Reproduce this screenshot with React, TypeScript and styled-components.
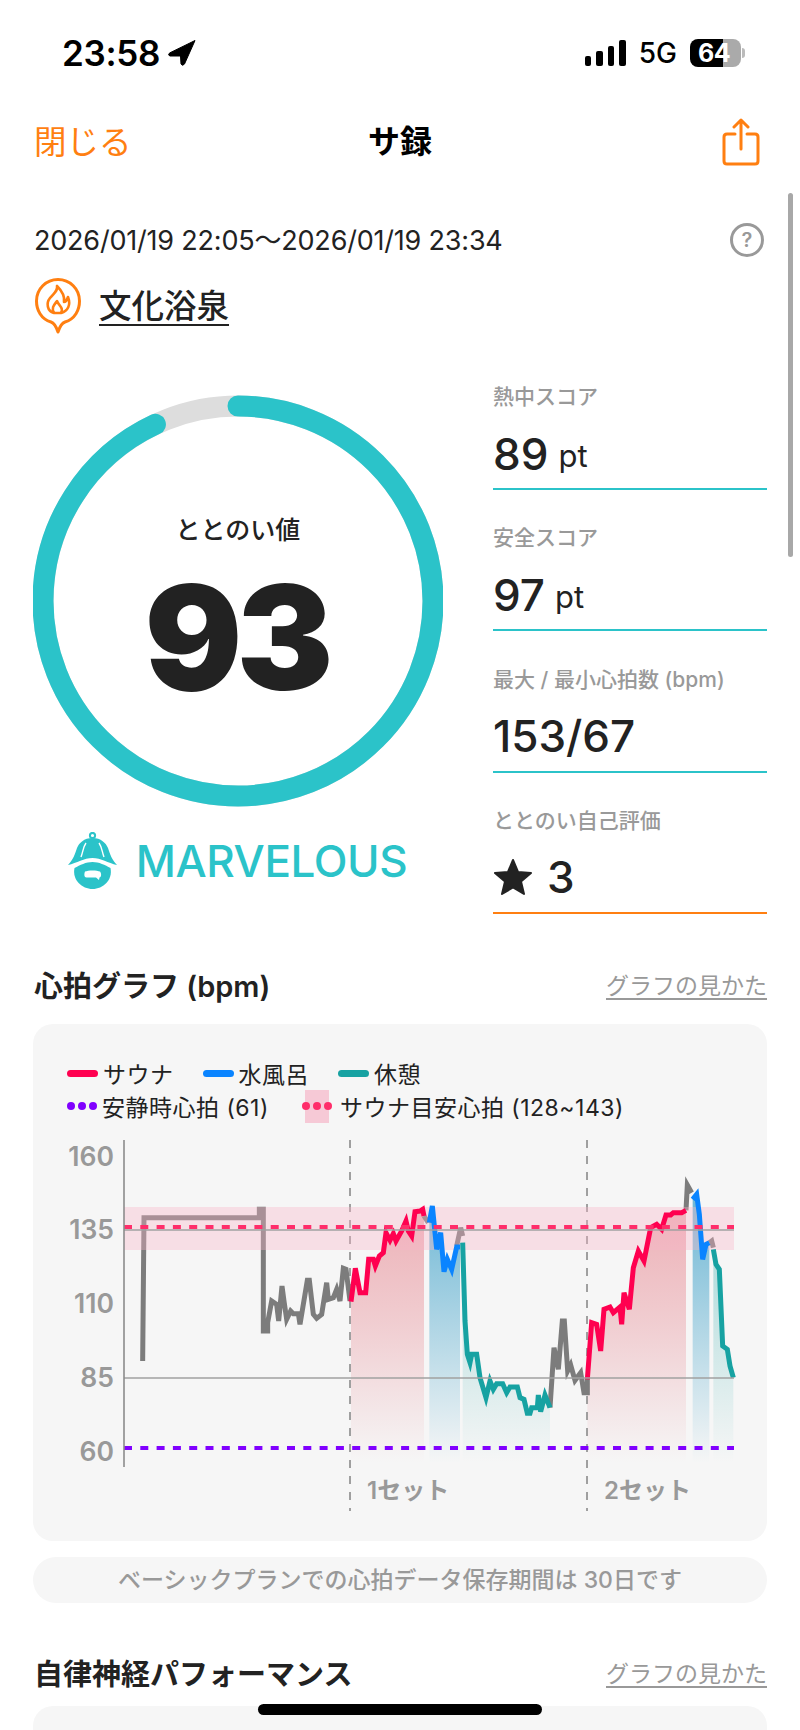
import React, { FC } from 'react'
import styled, { createGlobalStyle } from 'styled-components'

const ORANGE = '#ff7f11'
const TEAL = '#2bc3c9'
const INK = '#222'
const MUTED = '#999'
const SANS = `Inter, "Noto Sans CJK JP", sans-serif`

type Point = [number, number]
type Kind = 'idle' | 'sauna' | 'water' | 'rest'

// traced from the reference, two local origins so the numbers stay readable
const fromA = (pts: Point[]): Point[] => pts.map(([x, y]) => [100 + x / 3, 1180 + y / 3])
const fromB = (pts: Point[]): Point[] => pts.map(([x, y]) => [430 + x / 3, 1180 + y / 3])

const segments: { kind: Kind; pts: Point[] }[] = [
  {
    kind: 'idle',
    pts: fromA([
      [128, 540], [132, 110], [478, 110], [478, 85], [490, 85], [490, 450], [503, 450], [503, 425],
      [515, 360], [530, 370], [536, 420], [546, 315], [552, 360], [560, 415], [572, 390], [580, 398],
      [595, 398], [600, 430], [622, 298], [628, 298], [640, 400], [650, 412], [665, 400], [680, 305],
      [685, 355], [700, 350], [710, 325], [720, 360], [730, 262], [738, 265], [750, 360],
    ]),
  },
  {
    kind: 'sauna',
    pts: fromA([
      [753, 362], [766, 262], [780, 335], [797, 335], [806, 235], [820, 235], [826, 255], [838, 225],
      [850, 215], [858, 155], [870, 178], [880, 158], [888, 180], [905, 150], [918, 120], [925, 150],
      [935, 165], [945, 92], [960, 90], [968, 85], [972, 105],
    ]),
  },
  { kind: 'idle', pts: fromA([[972, 105], [985, 125]]) },
  {
    kind: 'water',
    pts: fromA([
      [988, 125], [997, 75], [1010, 205], [1022, 155], [1032, 272], [1042, 235], [1055, 265], [1070, 198],
      [1080, 198],
    ]),
  },
  { kind: 'idle', pts: fromB([[80, 195], [92, 140], [98, 165]]) },
  {
    kind: 'rest',
    pts: fromB([
      [98, 185], [105, 420], [112, 520], [120, 545], [125, 520], [140, 520], [150, 590], [168, 650],
      [180, 600], [190, 625], [200, 608], [218, 608], [230, 635], [240, 618], [262, 618], [270, 650],
      [282, 655], [292, 697], [300, 697], [305, 680], [322, 680], [325, 642], [332, 692], [345, 642],
      [360, 680],
    ]),
  },
  {
    kind: 'idle',
    pts: fromB([
      [360, 680], [372, 500], [385, 565], [397, 420], [403, 420], [413, 570], [422, 552], [435, 598],
      [452, 575], [462, 635], [472, 635], [472, 590],
    ]),
  },
  {
    kind: 'sauna',
    pts: fromB([
      [472, 595], [485, 425], [500, 430], [512, 510], [522, 385], [540, 378], [550, 395], [570, 378],
      [575, 430], [582, 335], [598, 385], [610, 260], [625, 210], [642, 240], [662, 140], [680, 130],
      [695, 145], [708, 102], [722, 102], [730, 95], [755, 95], [768, 88],
    ]),
  },
  { kind: 'idle', pts: fromB([[768, 88], [772, 12], [785, 35]]) },
  {
    kind: 'water',
    pts: fromB([[788, 55], [800, 40], [808, 100], [818, 235], [828, 190], [838, 185]]),
  },
  { kind: 'idle', pts: fromB([[838, 185], [845, 180], [850, 200]]) },
  {
    kind: 'rest',
    pts: fromB([[850, 205], [858, 250], [868, 265], [878, 495], [892, 505], [900, 555], [910, 590]]),
  },
]

const traceColor: Record<Kind, string> = {
  idle: '#7c7c7c',
  sauna: '#ff0050',
  water: '#0a84ff',
  rest: '#17a2a2',
}

const toLine = (pts: Point[]) => pts.map(p => p.join(',')).join(' ')
const FILL_BOTTOM = 1462
const toArea = (pts: Point[]) =>
  toLine([[pts[0][0], FILL_BOTTOM], ...pts, [pts[pts.length - 1][0], FILL_BOTTOM]])

const yTicks = [
  { label: '160', y: 1155 },
  { label: '135', y: 1228 },
  { label: '110', y: 1302 },
  { label: '85', y: 1376 },
  { label: '60', y: 1450 },
]

const stats = [
  { label: '熱中スコア', value: '89', unit: 'pt' },
  { label: '安全スコア', value: '97', unit: 'pt' },
  { label: '最大 / 最小心拍数 (bpm)', value: '153/67' },
]

const GlobalStyle = createGlobalStyle`
  html, body {
    margin: 0;
    padding: 0;
    background: #fff;
    overflow: hidden;
  }
  * {
    box-sizing: border-box;
  }
`

const HeartChart: FC = () => (
  <ChartSvg viewBox='33 1130 734 392'>
    <defs>
      <linearGradient id='fill-sauna' gradientUnits='userSpaceOnUse' x1='0' y1='1206' x2='0' y2='1462'>
        <stop offset='0' stopColor='#e88f98' stopOpacity='0.68' />
        <stop offset='0.45' stopColor='#e88f98' stopOpacity='0.4' />
        <stop offset='1' stopColor='#e88f98' stopOpacity='0' />
      </linearGradient>
      <linearGradient id='fill-water' gradientUnits='userSpaceOnUse' x1='0' y1='1206' x2='0' y2='1462'>
        <stop offset='0' stopColor='#5aaed0' stopOpacity='0.85' />
        <stop offset='1' stopColor='#5aaed0' stopOpacity='0' />
      </linearGradient>
      <linearGradient id='fill-rest' gradientUnits='userSpaceOnUse' x1='0' y1='1260' x2='0' y2='1462'>
        <stop offset='0' stopColor='#17a2a2' stopOpacity='0.3' />
        <stop offset='1' stopColor='#17a2a2' stopOpacity='0' />
      </linearGradient>
    </defs>

    {segments
      .filter(s => s.kind !== 'idle')
      .map((s, i) => (
        <polygon key={i} points={toArea(s.pts)} fill={`url(#fill-${s.kind})`} />
      ))}

    <line x1='350' x2='350' y1='1139' y2='1510' stroke='#8a8a8a' strokeWidth='1.6' strokeDasharray='8 8' />
    <line x1='587' x2='587' y1='1139' y2='1510' stroke='#8a8a8a' strokeWidth='1.6' strokeDasharray='8 8' />

    {segments
      .filter(s => s.kind === 'idle')
      .map((s, i) => (
        <polyline key={i} points={toLine(s.pts)} fill='none' stroke={traceColor.idle} strokeWidth='5' />
      ))}

    <rect x='124' y='1206' width='610' height='43' fill='#f9b4c8' fillOpacity='0.36' />

    {segments
      .filter(s => s.kind !== 'idle')
      .map((s, i) => (
        <polyline key={i} points={toLine(s.pts)} fill='none' stroke={traceColor[s.kind]} strokeWidth='5' />
      ))}

    <line x1='124' x2='734' y1='1229' y2='1229' stroke='#a0a0a0' strokeWidth='1.5' />
    <line x1='124' x2='734' y1='1377' y2='1377' stroke='#a0a0a0' strokeWidth='1.5' />
    <line x1='124' x2='734' y1='1226' y2='1226' stroke='#ff2d6a' strokeWidth='4' strokeDasharray='8 8.3' />
    <line x1='124' x2='734' y1='1447' y2='1447' stroke='#8000ff' strokeWidth='4' strokeDasharray='8 8.3' />
    <line x1='124' x2='124' y1='1139' y2='1466' stroke='#8c8c8c' strokeWidth='1.6' />

    {yTicks.map(t => (
      <AxisLabel key={t.label} x='114' y={t.y + 9.5} textAnchor='end'>
        {t.label}
      </AxisLabel>
    ))}
    <SetLabel x='367' y='1498'>1セット</SetLabel>
    <SetLabel x='604' y='1498'>2セット</SetLabel>
  </ChartSvg>
)

const App: FC = () => {
  return (
    <Page>
      <GlobalStyle />
      <StatusBar>
        <Clock>
          23:58
          <svg width='28' height='26' viewBox='0 0 28 26'>
            <path d='M27 0.5 L1.5 13 Q-0.5 15.5 2 16 L12.5 16 L13 24 Q14.5 26.5 16.5 24 Z' fill='#000' stroke='#000' strokeLinejoin='round' />
          </svg>
        </Clock>
        <StatusRight>
          <Signal>
            <SignalBar $h={10} />
            <SignalBar $h={15} />
            <SignalBar $h={20} />
            <SignalBar $h={26} />
          </Signal>
          <Network>5G</Network>
          <Battery>64</Battery>
        </StatusRight>
      </StatusBar>

      <Nav>
        <CloseLink>閉じる</CloseLink>
        <NavTitle>サ録</NavTitle>
        <ShareButton>
          <svg width='38' height='48' viewBox='0 0 38 48' fill='none' stroke={ORANGE} strokeWidth='3' strokeLinecap='round' strokeLinejoin='round'>
            <path d='M13 16 H5 Q2 16 2 19 V43 Q2 46 5 46 H33 Q36 46 36 43 V19 Q36 16 33 16 H25' />
            <path d='M19 31 V2 M12 9 L19 2 L26 9' />
          </svg>
        </ShareButton>
      </Nav>

      <Content>
        <MetaRow>
          <DateRange>2026/01/19 22:05～2026/01/19 23:34</DateRange>
          <Help>?</Help>
        </MetaRow>

        <VenueRow>
          <svg width='46' height='56' viewBox='0 0 46 56' fill='none' stroke={ORANGE} strokeLinejoin='round'>
            <path strokeWidth='3' d='M16 44 C6 41 1.5 32 1.5 23 C1.5 11 11 1.5 23 1.5 C35 1.5 44.5 11 44.5 23 C44.5 32 40 41 30 44 C27 45 25 48 23 54 C21 48 19 45 16 44 Z' />
            <path strokeWidth='2.6' d='M22 8 C23 13 19 15 15 20 C11 25 12 33 19 35 L26 35 C33 33 36 27 33 19 C32 22 30 24 29 24 C30 18 26 12 22 8 Z' />
            <path strokeWidth='2.6' d='M19 35 C16 30 19 27 22 23 C24 28 29 30 26 35' />
          </svg>
          <VenueName>文化浴泉</VenueName>
        </VenueRow>

        <Summary>
          <ScoreColumn>
            <Ring>
              <svg width='410' height='412' viewBox='0 0 410 412'>
                <circle cx='205' cy='206' r='195' fill='none' stroke='#ddd' strokeWidth='21' />
                <circle
                  cx='205'
                  cy='206'
                  r='195'
                  fill='none'
                  stroke={TEAL}
                  strokeWidth='21'
                  strokeLinecap='round'
                  strokeDasharray={`${2 * Math.PI * 195 * 0.93} ${2 * Math.PI * 195}`}
                  transform='rotate(-90 205 206)'
                />
              </svg>
              <RingText>
                <RingLabel>ととのい値</RingLabel>
                <RingValue>93</RingValue>
              </RingText>
            </Ring>
            <Rank>
              <svg width='50' height='57' viewBox='0 0 50 57'>
                <circle cx='24.5' cy='3.5' r='2.6' fill='none' stroke={TEAL} strokeWidth='2' />
                <path fill={TEAL} d='M24.5 6 C16 6 11 11 9 16 C7 22 5 28 0 33 C9 31 16 26 24.5 26 C33 26 40 31 49 33 C44 28 42 22 40 16 C38 11 33 6 24.5 6 Z' />
                <path fill='none' stroke='#fff' strokeWidth='1.4' d='M18 11 C15 15 15 20 13 25 M31 11 C34 15 34 20 36 25' />
                <path fill={TEAL} d='M6.5 36 C12 33 18 30 24.5 30 C31 30 37 33 42.5 36 C45 48 35 57 24.5 57 C14 57 4 48 6.5 36 Z' />
                <path fill='#fff' d='M17 39.5 C20 38 29 38 32 39.5 C34 42 33 45.5 31.5 45.5 L31 48 L28 45.5 L18.5 45.5 C16 45.5 16 42 17 39.5 Z' />
              </svg>
              <RankName>MARVELOUS</RankName>
            </Rank>
          </ScoreColumn>

          <StatColumn>
            {stats.map(s => (
              <Stat key={s.label} $accent={TEAL}>
                <StatLabel>{s.label}</StatLabel>
                <StatValue>
                  {s.value}
                  {s.unit && <StatUnit>{s.unit}</StatUnit>}
                </StatValue>
              </Stat>
            ))}
            <Stat $accent={ORANGE}>
              <StatLabel>ととのい自己評価</StatLabel>
              <StatValue>
                <svg width='40' height='38' viewBox='0 0 40 38'>
                  <path fill={INK} stroke={INK} strokeWidth='2' strokeLinejoin='round' d='M20 2 L25 14 L38 15 L28 23.5 L31 36 L20 29.5 L9 36 L12 23.5 L2 15 L15 14 Z' />
                </svg>
                <StarCount>3</StarCount>
              </StatValue>
            </Stat>
          </StatColumn>
        </Summary>

        <SectionHead $top={50}>
          <SectionTitle>心拍グラフ (bpm)</SectionTitle>
          <GuideLink>グラフの見かた</GuideLink>
        </SectionHead>

        <ChartCard>
          <Legend>
            <LegendRow $gap={29}>
              <LegendItem>
                <LegendLine $color={traceColor.sauna} />
                サウナ
              </LegendItem>
              <LegendItem>
                <LegendLine $color={traceColor.water} />
                水風呂
              </LegendItem>
              <LegendItem>
                <LegendLine $color={traceColor.rest} />
                休憩
              </LegendItem>
            </LegendRow>
            <LegendRow $gap={33}>
              <LegendItem>
                <LegendDots>
                  <Dot $color='#8000ff' />
                  <Dot $color='#8000ff' />
                  <Dot $color='#8000ff' />
                </LegendDots>
                安静時心拍 (61)
              </LegendItem>
              <LegendItem $gap={8}>
                <LegendDots $band>
                  <Dot $color='#ff2d6a' />
                  <Dot $color='#ff2d6a' />
                  <Dot $color='#ff2d6a' />
                </LegendDots>
                サウナ目安心拍 (128~143)
              </LegendItem>
            </LegendRow>
          </Legend>
          <HeartChart />
        </ChartCard>

        <Notice>ベーシックプランでの心拍データ保存期間は 30日です</Notice>

        <SectionHead $top={49}>
          <SectionTitle>自律神経パフォーマンス</SectionTitle>
          <GuideLink>グラフの見かた</GuideLink>
        </SectionHead>

        <NextCard />
      </Content>

      <ScrollThumb />
      <HomeIndicator />
    </Page>
  )
}

const Page = styled.div`
  position: relative;
  width: 800px;
  height: 1730px;
  overflow: hidden;
  background: #fff;
  font-family: ${SANS};
  color: ${INK};
`

const StatusBar = styled.div`
  height: 106px;
  padding: 0 59px 0 62px;
  display: flex;
  align-items: center;
  justify-content: space-between;
`

const Clock = styled.div`
  display: flex;
  align-items: center;
  gap: 8px;
  font-size: 35px;
  font-weight: 600;
  letter-spacing: -0.3px;
  color: #000;
`

const StatusRight = styled.div`
  display: flex;
  align-items: center;
`

const Signal = styled.div`
  display: flex;
  align-items: flex-end;
  gap: 5px;
  height: 26px;
`

const SignalBar = styled.span<{ $h: number }>`
  width: 6.5px;
  height: ${p => p.$h}px;
  border-radius: 2px;
  background: #000;
`

const Network = styled.span`
  margin-left: 13px;
  font-size: 28px;
  font-weight: 500;
  color: #000;
`

const Battery = styled.div`
  position: relative;
  margin-left: 13px;
  width: 51px;
  height: 28px;
  border-radius: 8px;
  background: linear-gradient(90deg, #000 0 65%, #aaa 65% 100%);
  color: #fff;
  font-size: 25px;
  font-weight: 700;
  line-height: 28px;
  padding-left: 8px;
  letter-spacing: -0.5px;

  &::after {
    content: '';
    position: absolute;
    right: -4px;
    top: 9px;
    width: 3px;
    height: 10px;
    border-radius: 0 3px 3px 0;
    background: #bbb;
  }
`

const Nav = styled.div`
  height: 74px;
  padding: 0 34px;
  display: grid;
  grid-template-columns: 1fr auto 1fr;
  align-items: center;
`

const CloseLink = styled.span`
  margin-bottom: 7px;
  font-size: 32.5px;
  color: ${ORANGE};
`

const NavTitle = styled.span`
  margin-bottom: 8px;
  font-size: 32px;
  font-weight: 700;
  color: #000;
`

const ShareButton = styled.div`
  display: flex;
  justify-content: flex-end;
  margin-top: -3px;
  margin-right: 6px;
  height: 48px;
`

const Content = styled.div`
  padding: 40px 33px 0 33px;
`

const MetaRow = styled.div`
  height: 40px;
  display: flex;
  align-items: center;
  justify-content: space-between;
`

const DateRange = styled.span`
  margin-left: 1px;
  margin-bottom: 4px;
  font-size: 27px;
  letter-spacing: -0.2px;
  color: ${INK};
  white-space: nowrap;
`

const Help = styled.span`
  width: 34px;
  height: 34px;
  margin-right: 3px;
  border: 3px solid ${MUTED};
  border-radius: 50%;
  display: flex;
  align-items: center;
  justify-content: center;
  font-size: 20px;
  font-weight: 600;
  color: ${MUTED};
`

const VenueRow = styled.div`
  margin-top: 18px;
  margin-left: 2px;
  display: flex;
  align-items: center;
  gap: 18px;
  height: 56px;
`

const VenueName = styled.span`
  margin-bottom: 6px;
  font-size: 32.5px;
  font-weight: 500;
  color: ${INK};
  text-decoration: underline;
  text-underline-offset: 6px;
  text-decoration-thickness: 2px;
`

const Summary = styled.div`
  margin-top: 46px;
  display: flex;
  align-items: flex-start;
  justify-content: space-between;
`

const ScoreColumn = styled.div`
  width: 410px;
  padding-top: 15px;
  display: flex;
  flex-direction: column;
  align-items: center;
`

const Ring = styled.div`
  position: relative;
  width: 410px;
  height: 412px;
`

const RingText = styled.div`
  position: absolute;
  inset: 0;
  display: flex;
  flex-direction: column;
  align-items: center;
  padding-top: 118px;
`

const RingLabel = styled.div`
  font-size: 25px;
  font-weight: 500;
  line-height: 34px;
`

const RingValue = styled.div`
  margin-top: 3px;
  margin-right: 4px;
  font-size: 145px;
  font-weight: 900;
  line-height: 176px;
  letter-spacing: -6px;
  color: ${INK};
`

const Rank = styled.div`
  margin-top: 25px;
  margin-left: -1px;
  display: flex;
  align-items: center;
  gap: 18px;
`

const RankName = styled.span`
  font-size: 44px;
  font-weight: 500;
  color: ${TEAL};
  letter-spacing: -0.4px;
`

const StatColumn = styled.div`
  width: 274px;
  display: flex;
  flex-direction: column;
  gap: 31.3px;
`

const Stat = styled.div<{ $accent: string }>`
  height: 110px;
  border-bottom: 2px solid ${p => p.$accent};
`

const StatLabel = styled.div`
  height: 34px;
  line-height: 34px;
  font-size: 21px;
  font-weight: 500;
  color: ${MUTED};
  white-space: nowrap;
`

const StatValue = styled.div`
  height: 74px;
  padding-top: 5px;
  display: flex;
  align-items: center;
  font-size: 44px;
  font-weight: 550;
  color: ${INK};
`

const StatUnit = styled.span`
  margin-left: 10px;
  margin-top: 4px;
  font-size: 31px;
  font-weight: 400;
`

const StarCount = styled.span`
  margin-left: 14px;
  font-weight: 450;
`

const SectionHead = styled.div<{ $top: number }>`
  margin-top: ${p => p.$top}px;
  height: 40px;
  display: flex;
  align-items: center;
  justify-content: space-between;
`

const SectionTitle = styled.h2`
  margin: 0 0 0 1px;
  font-size: 29px;
  font-weight: 600;
  color: ${INK};
`

const GuideLink = styled.span`
  font-size: 23px;
  color: ${MUTED};
  text-decoration: underline;
  text-underline-offset: 4px;
`

const ChartCard = styled.div`
  margin-top: 20px;
  height: 517px;
  border-radius: 20px;
  background: #f6f6f6;
  padding-top: 33px;
`

const Legend = styled.div`
  padding-left: 34px;
`

const LegendRow = styled.div<{ $gap: number }>`
  height: 33px;
  display: flex;
  align-items: center;
  gap: ${p => p.$gap}px;
`

const LegendItem = styled.div<{ $gap?: number }>`
  display: flex;
  align-items: center;
  gap: ${p => p.$gap ?? 5}px;
  font-size: 23px;
  letter-spacing: 0.5px;
  color: ${INK};
  white-space: nowrap;
`

const LegendLine = styled.span<{ $color: string }>`
  width: 31px;
  height: 7px;
  border-radius: 4px;
  background: ${p => p.$color};
`

const LegendDots = styled.span<{ $band?: boolean }>`
  position: relative;
  width: 30px;
  height: 8px;
  display: flex;
  justify-content: space-between;

  &::before {
    content: '';
    display: ${p => (p.$band ? 'block' : 'none')};
    position: absolute;
    left: 3px;
    top: -12px;
    width: 24px;
    height: 33px;
    background: #f6c9d6;
  }
`

const Dot = styled.i<{ $color: string }>`
  position: relative;
  width: 8px;
  height: 8px;
  border-radius: 50%;
  background: ${p => p.$color};
`

const ChartSvg = styled.svg`
  display: block;
  margin-top: 8px;
  width: 734px;
  height: 392px;
`

const AxisLabel = styled.text`
  font-family: ${SANS};
  font-size: 26.5px;
  font-weight: 600;
  fill: ${MUTED};
`

const SetLabel = styled.text`
  font-family: ${SANS};
  font-size: 24px;
  font-weight: 600;
  fill: ${MUTED};
`

const Notice = styled.div`
  margin-top: 16px;
  height: 46px;
  padding-bottom: 3px;
  border-radius: 23px;
  background: #f6f6f6;
  display: flex;
  align-items: center;
  justify-content: center;
  font-size: 23px;
  font-weight: 500;
  color: ${MUTED};
`

const NextCard = styled.div`
  margin-top: 14px;
  height: 200px;
  border-radius: 20px;
  background: #f6f6f6;
`

const ScrollThumb = styled.div`
  position: absolute;
  right: 7px;
  top: 193px;
  width: 5px;
  height: 364px;
  border-radius: 3px;
  background: #a8a8a8;
`

const HomeIndicator = styled.div`
  position: absolute;
  left: 258px;
  top: 1704px;
  width: 284px;
  height: 11px;
  border-radius: 6px;
  background: #000;
`

export default App
